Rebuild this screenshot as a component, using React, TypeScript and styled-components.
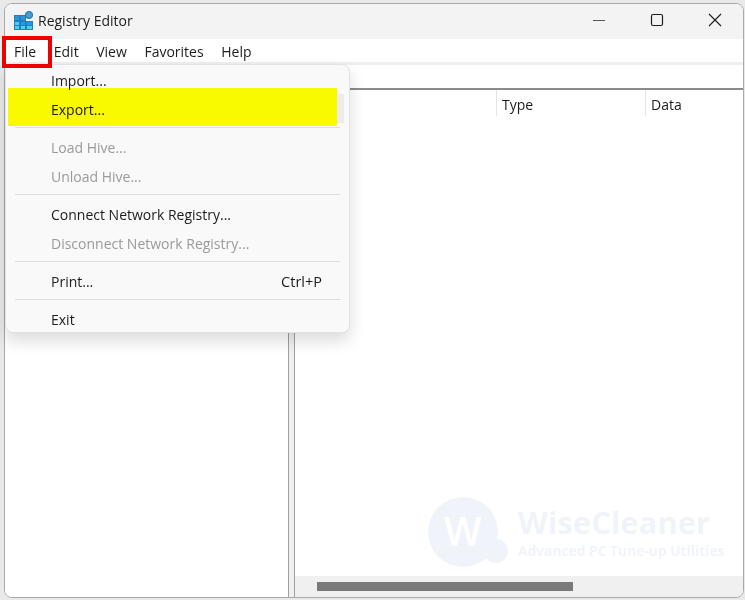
import React from 'react';
import styled, { createGlobalStyle } from 'styled-components';

const GlobalStyle = createGlobalStyle`
  html, body {
    margin: 0;
    padding: 0;
    background: #fff;
  }
  body {
    font-family: "Open Sans", "Noto Sans", "Liberation Sans", sans-serif;
    color: #1c1c1c;
  }
`;

const Page = styled.div`
  position: relative;
  width: 745px;
  height: 600px;
  box-sizing: border-box;
  padding: 3px 1px 2px 4px;
  overflow: hidden;
  background: #e9e9e9;
`;

const Window = styled.div`
  width: 100%;
  height: 100%;
  box-sizing: border-box;
  display: flex;
  flex-direction: column;
  background: #fff;
  border: 1px solid #a9a9a9;
  border-radius: 8px;
  overflow: hidden;
`;

const TitleBar = styled.div`
  height: 35px;
  flex: none;
  box-sizing: border-box;
  display: flex;
  align-items: center;
  background: #f3f3f3;
  padding: 0 0 3px 9px;
  font-size: 14px;
`;

const TitleText = styled.span`
  margin-left: 4px;
  flex: 1;
`;

const WinButton = styled.div`
  width: 58px;
  height: 32px;
  display: flex;
  align-items: center;
  justify-content: center;
  &:last-child {
    width: 57px;
  }
`;

const MenuBar = styled.div`
  height: 23px;
  flex: none;
  display: flex;
  align-items: center;
  padding-left: 9px;
  gap: 17.6px;
  background: #fff;
  font-size: 14px;
`;

const MenuLabel = styled.span`
  line-height: 23px;
  position: relative;
  top: 1px;
`;

const Strip = styled.div`
  height: 3px;
  flex: none;
  background: #efefef;
`;

const AddressBar = styled.div`
  height: 23px;
  flex: none;
  background: #fff;
`;

const Panes = styled.div`
  flex: 1;
  display: flex;
  min-height: 0;
`;

const TreePane = styled.div`
  width: 283px;
  flex: none;
  background: #fff;
  border-right: 1px solid #a0a0a0;
`;

const Splitter = styled.div`
  width: 5px;
  flex: none;
  background: #f0f0f0;
`;

const ListPane = styled.div`
  flex: 1;
  display: flex;
  flex-direction: column;
  border-left: 1px solid #a0a0a0;
  border-top: 2px solid #8c8c8c;
  min-width: 0;
`;

const HeaderRow = styled.div`
  height: 26px;
  flex: none;
  display: flex;
  font-size: 14px;
`;

const HeaderCell = styled.div<{ $width: number }>`
  width: ${({ $width }) => $width}px;
  flex: none;
  box-sizing: border-box;
  padding-left: 5px;
  line-height: 30px;
  border-right: 1px solid #e5e5e5;
  &:last-child {
    border-right: none;
  }
`;

const ListBody = styled.div`
  flex: 1;
`;

const ScrollTrack = styled.div`
  height: 21px;
  flex: none;
  display: flex;
  align-items: center;
  background: #f0f0f0;
  padding-left: 22px;
`;

const ScrollThumb = styled.div`
  width: 256px;
  height: 9px;
  background: #7a7a7a;
`;

const Menu = styled.div`
  position: absolute;
  left: 5px;
  top: 64px;
  width: 345px;
  height: 269px;
  box-sizing: border-box;
  padding-top: 1px;
  background: #f9f9f9;
  border: 1px solid #e2e2e2;
  border-radius: 8px;
  box-shadow: 0 8px 16px rgba(0, 0, 0, 0.14);
  font-size: 14px;
  display: flex;
  flex-direction: column;
`;

const MenuItem = styled.div<{ $disabled?: boolean }>`
  height: 29px;
  flex: none;
  display: flex;
  align-items: center;
  justify-content: space-between;
  padding: 0 27px 0 45px;
  color: ${({ $disabled }) => ($disabled ? '#9a9a9a' : '#1c1c1c')};
`;

const Shortcut = styled.span`
  font-size: 14.5px;
`;

const Separator = styled.div`
  height: 1px;
  flex: none;
  margin: 3px 9px 5px 9px;
  background: #dedede;
`;

const Highlight = styled.div`
  position: absolute;
  left: 8px;
  top: 88px;
  width: 329px;
  height: 38px;
  background: #ffff00;
  mix-blend-mode: multiply;
`;

const HoverEdge = styled.div`
  position: absolute;
  left: 337px;
  top: 94px;
  width: 7px;
  height: 29px;
  background: #ececec;
`;

const FileMarker = styled.div`
  position: absolute;
  left: 2px;
  top: 36px;
  width: 50px;
  height: 32px;
  box-sizing: border-box;
  border: 4px solid #ee0000;
`;

const Watermark = styled.div`
  position: absolute;
  left: 427px;
  top: 495px;
  display: flex;
`;

const WatermarkText = styled.div`
  display: flex;
  flex-direction: column;
  margin-left: 5px;
  margin-top: 8px;
  color: #f0f4fa;
  font-weight: 700;
`;

const WatermarkName = styled.span`
  font-size: 31px;
  line-height: 38px;
`;

const WatermarkTag = styled.span`
  font-size: 13.8px;
  line-height: 20px;
  white-space: nowrap;
`;

const RegistryIcon = () => (
  <svg width="20" height="20" viewBox="0 0 20 20">
    <rect x="0" y="5" width="12" height="15" fill="#1f7fc4" />
    <rect x="12" y="11" width="7" height="9" fill="#1f7fc4" />
    <path d="M1 6h4v4H1zM7 6h4v4H7zM7 12h4v3H7zM13 12h5v3h-5z" fill="#2f96d6" />
    <path d="M1 12h4v3H1zM1 16h4v3H1zM7 16h4v3H7zM13 16h5v3h-5z" fill="#4fd0ea" />
    <circle cx="15" cy="5" r="3.6" fill="#3aa0d8" stroke="#2a6f9e" strokeWidth="1" />
  </svg>
);

const MinimizeIcon = () => (
  <svg width="14" height="14" viewBox="0 0 14 14">
    <path d="M1 7.5H13" stroke="#555" strokeWidth="1" fill="none" />
  </svg>
);

const MaximizeIcon = () => (
  <svg width="14" height="14" viewBox="0 0 14 14">
    <rect x="1.5" y="1.5" width="11" height="11" rx="1.5" stroke="#1c1c1c" strokeWidth="1.2" fill="none" />
  </svg>
);

const CloseIcon = () => (
  <svg width="14" height="14" viewBox="0 0 14 14">
    <path d="M1 1L13 13M13 1L1 13" stroke="#1c1c1c" strokeWidth="1.1" fill="none" />
  </svg>
);

const WiseLogo = () => (
  <svg width="86" height="74" viewBox="0 0 86 74">
    <circle cx="36" cy="37" r="35" fill="#f0f4fa" />
    <circle cx="69" cy="56" r="12" fill="#f0f4fa" />
    <text x="36" y="51" textAnchor="middle" fontFamily="Open Sans, sans-serif" fontWeight="600" fontSize="40" fill="#fff">
      W
    </text>
  </svg>
);

const App = () => (
  <>
    <GlobalStyle />
    <Page>
      <Window>
        <TitleBar>
          <RegistryIcon />
          <TitleText>Registry Editor</TitleText>
          <WinButton>
            <MinimizeIcon />
          </WinButton>
          <WinButton>
            <MaximizeIcon />
          </WinButton>
          <WinButton>
            <CloseIcon />
          </WinButton>
        </TitleBar>
        <MenuBar>
          <MenuLabel>File</MenuLabel>
          <MenuLabel>Edit</MenuLabel>
          <MenuLabel>View</MenuLabel>
          <MenuLabel>Favorites</MenuLabel>
          <MenuLabel>Help</MenuLabel>
        </MenuBar>
        <Strip />
        <AddressBar />
        <Panes>
          <TreePane />
          <Splitter />
          <ListPane>
            <HeaderRow>
              <HeaderCell $width={202} />
              <HeaderCell $width={149}>Type</HeaderCell>
              <HeaderCell $width={96}>Data</HeaderCell>
            </HeaderRow>
            <ListBody />
            <ScrollTrack>
              <ScrollThumb />
            </ScrollTrack>
          </ListPane>
        </Panes>
      </Window>
      <Watermark>
        <WiseLogo />
        <WatermarkText>
          <WatermarkName>WiseCleaner</WatermarkName>
          <WatermarkTag>Advanced PC Tune-up Utilities</WatermarkTag>
        </WatermarkText>
      </Watermark>
      <Menu>
        <MenuItem>Import...</MenuItem>
        <MenuItem>Export...</MenuItem>
        <Separator />
        <MenuItem $disabled>Load Hive...</MenuItem>
        <MenuItem $disabled>Unload Hive...</MenuItem>
        <Separator />
        <MenuItem>Connect Network Registry...</MenuItem>
        <MenuItem $disabled>Disconnect Network Registry...</MenuItem>
        <Separator />
        <MenuItem>
          <span>Print...</span>
          <Shortcut>Ctrl+P</Shortcut>
        </MenuItem>
        <Separator />
        <MenuItem>Exit</MenuItem>
      </Menu>
      <HoverEdge />
      <Highlight />
      <FileMarker />
    </Page>
  </>
);

export default App;
